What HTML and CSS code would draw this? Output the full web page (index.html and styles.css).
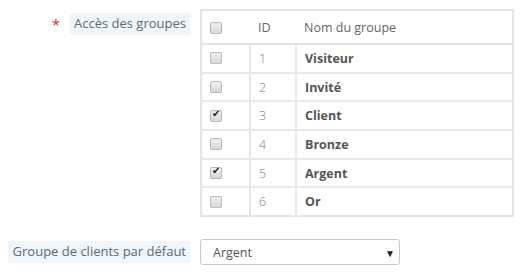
FILE: index.html
```html
<!DOCTYPE html>
<html lang="fr">
<head>
    <meta charset="UTF-8">
    <title>Groupes</title>
    <link rel="stylesheet" href="styles.css">
</head>
<body>
    <div class="form-group">
        <div class="label-col">
            <span class="required">*</span>
            <span class="label-text">Accès des groupes</span>
        </div>
        <table class="groups">
            <thead>
                <tr>
                    <th class="col-check"><input type="checkbox"></th>
                    <th class="col-id">ID</th>
                    <th>Nom du groupe</th>
                </tr>
            </thead>
            <tbody>
                <tr><td class="col-check"><input type="checkbox"></td><td class="col-id">1</td><td class="name">Visiteur</td></tr>
                <tr><td class="col-check"><input type="checkbox"></td><td class="col-id">2</td><td class="name">Invité</td></tr>
                <tr><td class="col-check"><input type="checkbox" checked></td><td class="col-id">3</td><td class="name">Client</td></tr>
                <tr><td class="col-check"><input type="checkbox"></td><td class="col-id">4</td><td class="name">Bronze</td></tr>
                <tr><td class="col-check"><input type="checkbox" checked></td><td class="col-id">5</td><td class="name">Argent</td></tr>
                <tr><td class="col-check"><input type="checkbox"></td><td class="col-id">6</td><td class="name">Or</td></tr>
            </tbody>
        </table>
    </div>

    <div class="form-group second">
        <div class="label-col middle">
            <span class="label-text">Groupe de clients par défaut</span>
        </div>
        <div class="select-wrap">
            <select>
                <option>Visiteur</option>
                <option>Invité</option>
                <option>Client</option>
                <option>Bronze</option>
                <option selected>Argent</option>
                <option>Or</option>
            </select>
        </div>
    </div>
</body>
</html>
```

FILE: styles.css
```css
body {
    margin: 0;
    padding: 9px 8px 0 8px;
    font-family: "Open Sans", "Liberation Sans", sans-serif;
    font-size: 12.5px;
    color: #555;
    background: #fff;
}
.form-group {
    display: flex;
    align-items: flex-start;
    gap: 10px;
}
.form-group.second {
    margin-top: 22px;
    align-items: center;
}
.label-col {
    width: 182px;
    display: flex;
    justify-content: flex-end;
    align-items: center;
    gap: 9px;
    padding-top: 4px;
}
.label-col.middle {
    padding-top: 0;
}
.required {
    color: #c0392b;
    font-size: 15px;
    line-height: 1;
}
.label-text {
    background: #eef6fa;
    color: #5a6b78;
    padding: 1px 4px 2px 5px;
    line-height: 19px;
    font-size: 13px;
    white-space: nowrap;
}
.groups {
    width: 314px;
    border-collapse: collapse;
    border: 2px solid #e3e3e3;
}
.groups th {
    text-align: left;
    font-weight: normal;
    color: #666;
    height: 31px;
    padding: 1px 0 0 8px;
    border-bottom: 2px solid #e3e3e3;
    background: #fff;
}
.groups td {
    height: 26.7px;
    padding: 0 0 0 8px;
    border: 2px solid #e8e8e8;
}
.groups tbody tr:last-child td {
    border-bottom: none;
}
.groups td:first-child { border-left: none; }
.groups td:last-child { border-right: none; }
.col-check {
    width: 39px;
}
.col-id {
    width: 36px;
    color: #777;
    font-weight: 300;
}
.name {
    font-weight: bold;
    color: #555;
}
input[type="checkbox"] {
    appearance: none;
    -webkit-appearance: none;
    width: 12px;
    height: 12px;
    margin: 0;
    border: 1px solid #b8b8b8;
    border-radius: 2px;
    background: linear-gradient(#f0f0f0, #d8d8d8);
    position: relative;
    display: block;
}
input[type="checkbox"]:checked::after {
    content: "✔";
    position: absolute;
    left: 1px;
    top: -3px;
    font-size: 10px;
    color: #222;
}
.select-wrap {
    position: relative;
    width: 200px;
}
.select-wrap select {
    appearance: none;
    -webkit-appearance: none;
    width: 200px;
    height: 26px;
    border: 1px solid #c8c8c8;
    border-radius: 3px;
    background: #fff;
    font-family: "Open Sans", "Liberation Sans", sans-serif;
    font-size: 12.5px;
    color: #555;
    padding: 0 0 0 12px;
}
.select-wrap::after {
    content: "▼";
    position: absolute;
    right: 5px;
    top: 7px;
    font-size: 10px;
    color: #222;
    pointer-events: none;
}
```
